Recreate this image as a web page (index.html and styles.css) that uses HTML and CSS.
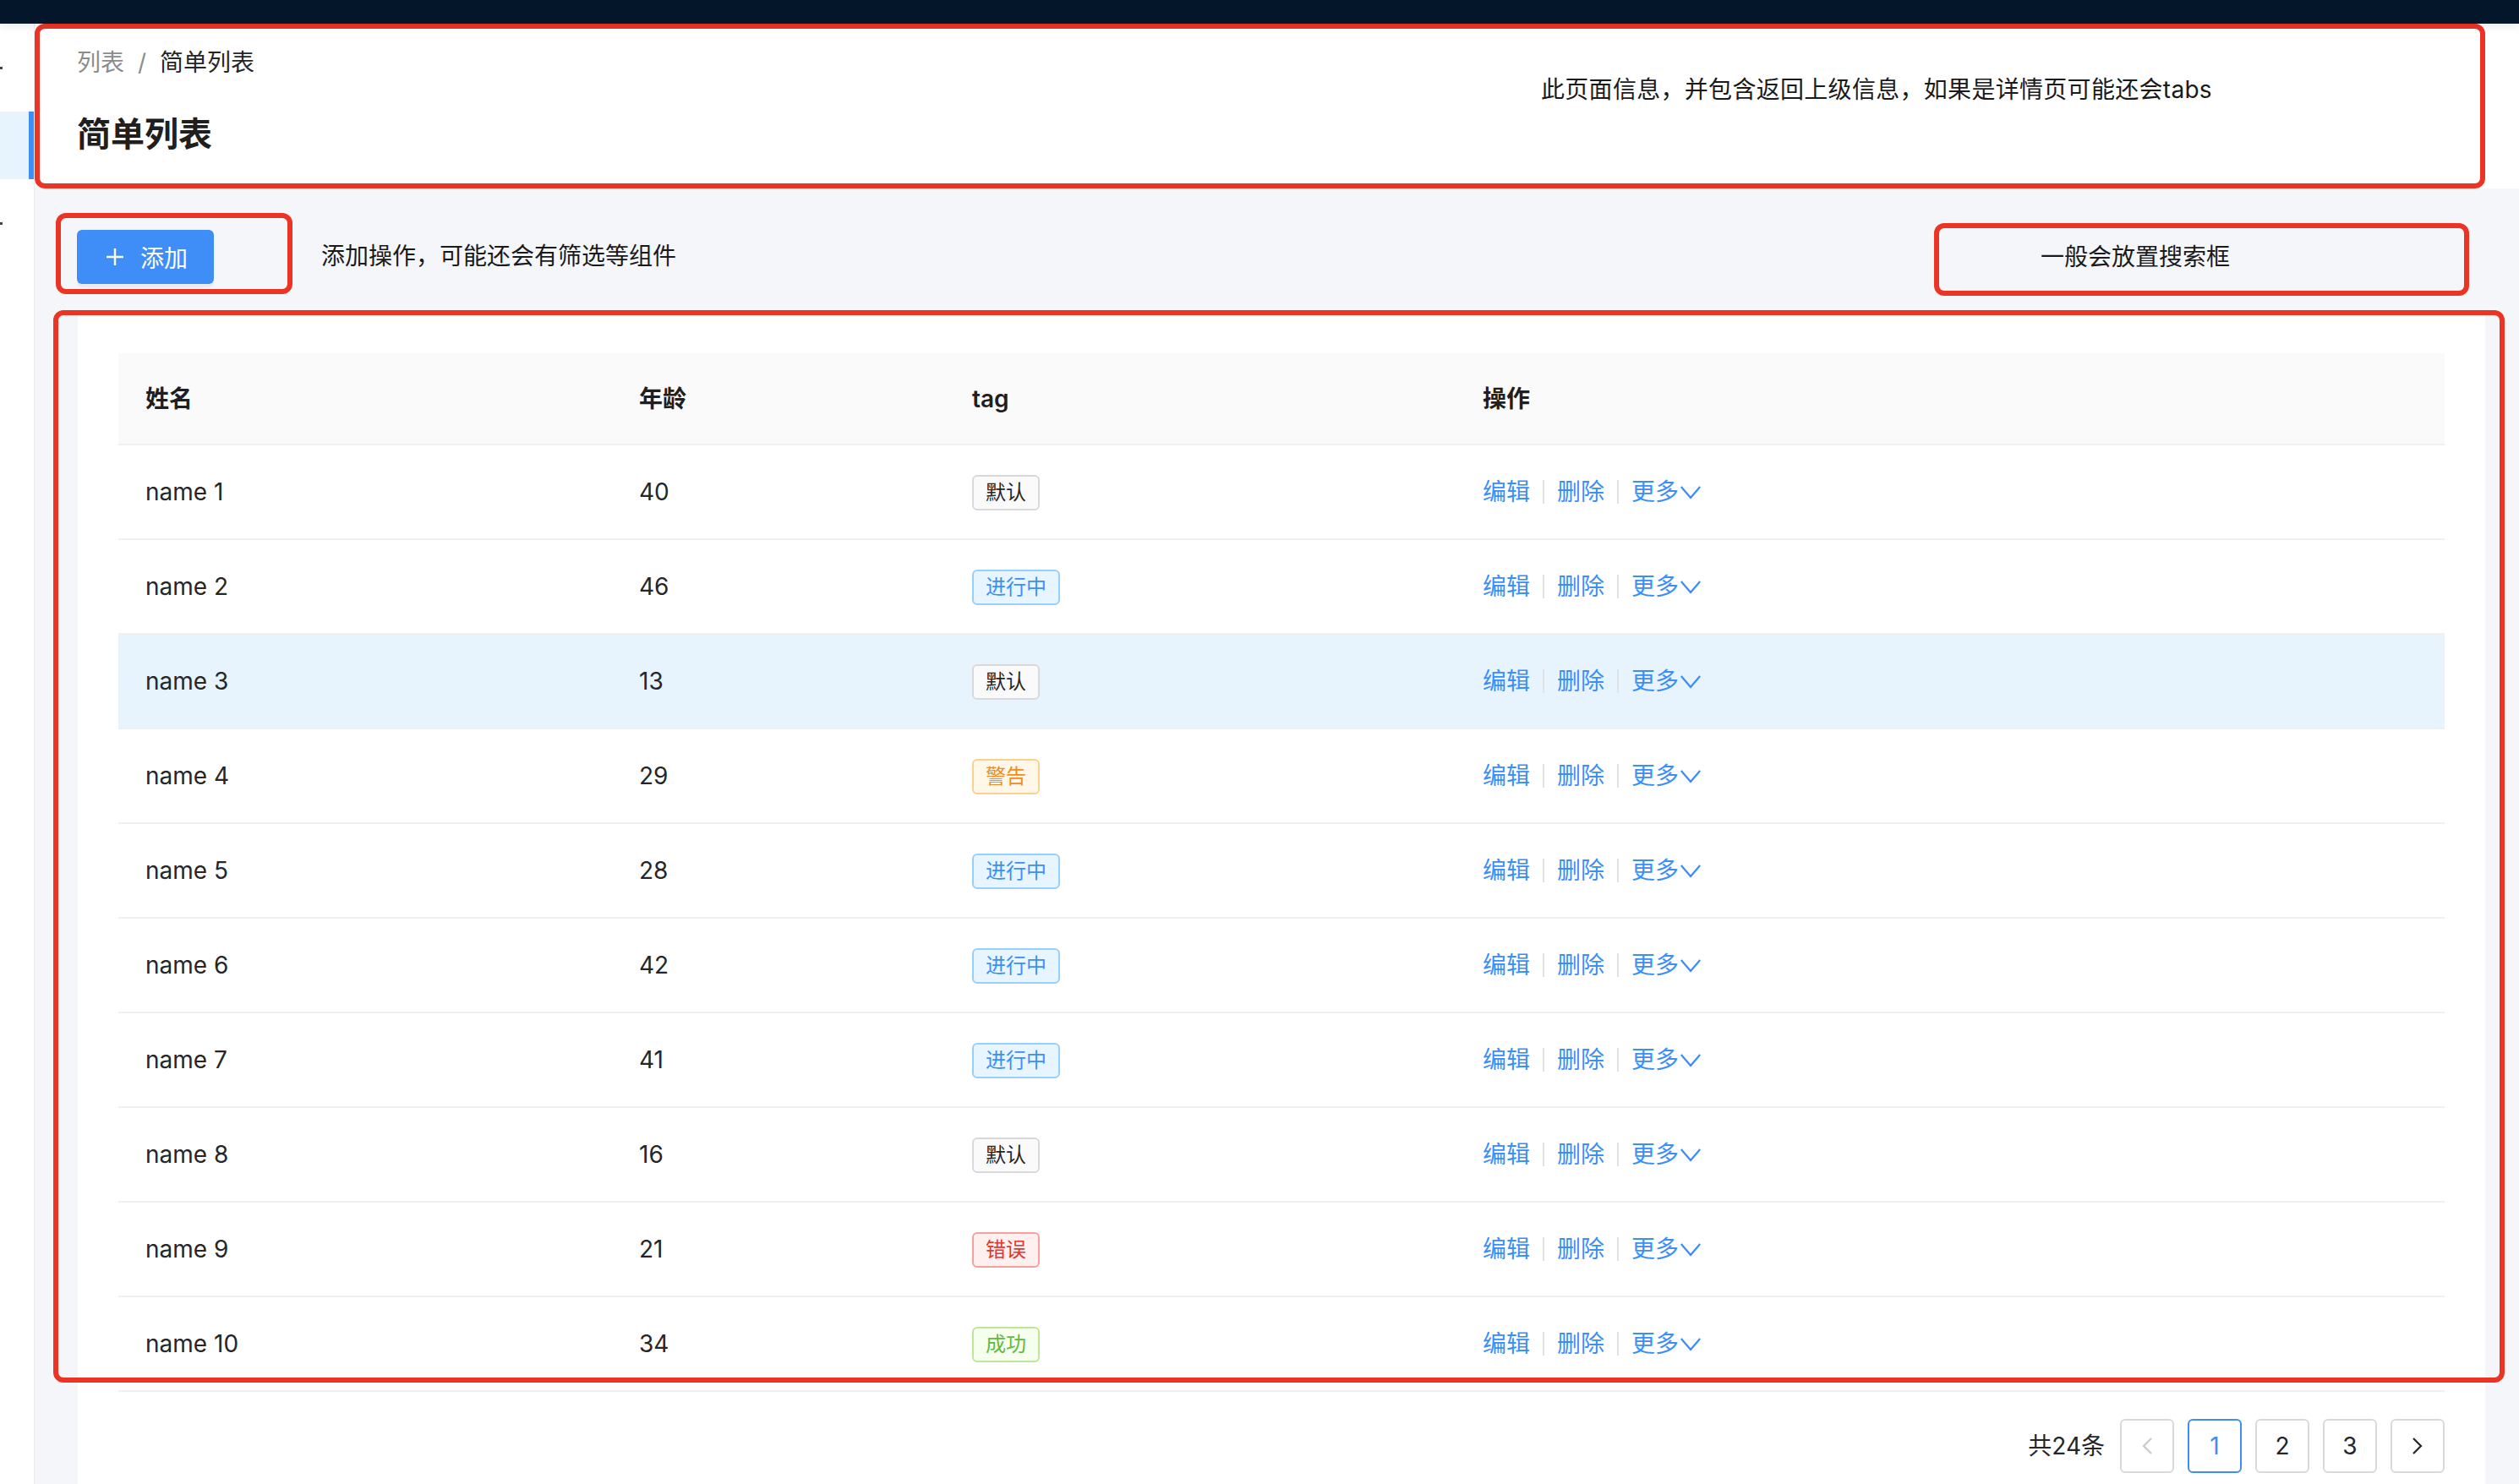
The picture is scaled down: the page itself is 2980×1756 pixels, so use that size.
FILE: index.html
```html
<!DOCTYPE html>
<html lang="zh-CN">
<head>
<meta charset="utf-8">
<title>简单列表</title>
<link rel="stylesheet" href="styles.css">
</head>
<body>
<div class="topbar"></div>
<div class="layout">
  <aside class="sider">
    <div class="menu-item tall"><span class="menu-dot"></span></div>
    <div class="menu-item selected"></div>
    <div class="menu-item tall"><span class="menu-dot"></span></div>
  </aside>
  <main class="main">
    <header class="page-header">
      <div class="header-frame">
        <div class="header-left">
          <nav class="breadcrumb"><span class="crumb-link">列表</span><span class="crumb-sep">/</span><span class="crumb-current">简单列表</span></nav>
          <h1 class="page-title">简单列表</h1>
        </div>
        <p class="header-note">此页面信息，并包含返回上级信息，如果是详情页可能还会tabs</p>
      </div>
    </header>

    <section class="toolbar">
      <div class="note-frame add-frame">
        <button class="btn-primary" type="button">
          <svg class="icon-plus" viewBox="0 0 22 22" width="22" height="22"><path d="M11 1v20M1 11h20" fill="none" stroke="currentColor" stroke-width="2.4"/></svg>
          <span>添加</span>
        </button>
      </div>
      <p class="toolbar-note">添加操作，可能还会有筛选等组件</p>
      <div class="note-frame search-frame"><span>一般会放置搜索框</span></div>
    </section>

    <section class="content">
      <div class="card">
        <div class="table">
          <div class="tr thead">
            <div class="cell">姓名</div>
            <div class="cell">年龄</div>
            <div class="cell">tag</div>
            <div class="cell">操作</div>
          </div>

          <div class="tr">
            <div class="cell">name 1</div><div class="cell">40</div>
            <div class="cell"><span class="tag tag-default">默认</span></div>
            <div class="cell actions"><a>编辑</a><i class="divider"></i><a>删除</a><i class="divider"></i><a class="more">更多<svg viewBox="0 0 28 18" width="26" height="17"><polyline points="2,2 14,16 26,2" fill="none" stroke="currentColor" stroke-width="2.4"/></svg></a></div>
          </div>
          <div class="tr">
            <div class="cell">name 2</div><div class="cell">46</div>
            <div class="cell"><span class="tag tag-processing">进行中</span></div>
            <div class="cell actions"><a>编辑</a><i class="divider"></i><a>删除</a><i class="divider"></i><a class="more">更多<svg viewBox="0 0 28 18" width="26" height="17"><polyline points="2,2 14,16 26,2" fill="none" stroke="currentColor" stroke-width="2.4"/></svg></a></div>
          </div>
          <div class="tr hover">
            <div class="cell">name 3</div><div class="cell">13</div>
            <div class="cell"><span class="tag tag-default">默认</span></div>
            <div class="cell actions"><a>编辑</a><i class="divider"></i><a>删除</a><i class="divider"></i><a class="more">更多<svg viewBox="0 0 28 18" width="26" height="17"><polyline points="2,2 14,16 26,2" fill="none" stroke="currentColor" stroke-width="2.4"/></svg></a></div>
          </div>
          <div class="tr">
            <div class="cell">name 4</div><div class="cell">29</div>
            <div class="cell"><span class="tag tag-warning">警告</span></div>
            <div class="cell actions"><a>编辑</a><i class="divider"></i><a>删除</a><i class="divider"></i><a class="more">更多<svg viewBox="0 0 28 18" width="26" height="17"><polyline points="2,2 14,16 26,2" fill="none" stroke="currentColor" stroke-width="2.4"/></svg></a></div>
          </div>
          <div class="tr">
            <div class="cell">name 5</div><div class="cell">28</div>
            <div class="cell"><span class="tag tag-processing">进行中</span></div>
            <div class="cell actions"><a>编辑</a><i class="divider"></i><a>删除</a><i class="divider"></i><a class="more">更多<svg viewBox="0 0 28 18" width="26" height="17"><polyline points="2,2 14,16 26,2" fill="none" stroke="currentColor" stroke-width="2.4"/></svg></a></div>
          </div>
          <div class="tr">
            <div class="cell">name 6</div><div class="cell">42</div>
            <div class="cell"><span class="tag tag-processing">进行中</span></div>
            <div class="cell actions"><a>编辑</a><i class="divider"></i><a>删除</a><i class="divider"></i><a class="more">更多<svg viewBox="0 0 28 18" width="26" height="17"><polyline points="2,2 14,16 26,2" fill="none" stroke="currentColor" stroke-width="2.4"/></svg></a></div>
          </div>
          <div class="tr">
            <div class="cell">name 7</div><div class="cell">41</div>
            <div class="cell"><span class="tag tag-processing">进行中</span></div>
            <div class="cell actions"><a>编辑</a><i class="divider"></i><a>删除</a><i class="divider"></i><a class="more">更多<svg viewBox="0 0 28 18" width="26" height="17"><polyline points="2,2 14,16 26,2" fill="none" stroke="currentColor" stroke-width="2.4"/></svg></a></div>
          </div>
          <div class="tr">
            <div class="cell">name 8</div><div class="cell">16</div>
            <div class="cell"><span class="tag tag-default">默认</span></div>
            <div class="cell actions"><a>编辑</a><i class="divider"></i><a>删除</a><i class="divider"></i><a class="more">更多<svg viewBox="0 0 28 18" width="26" height="17"><polyline points="2,2 14,16 26,2" fill="none" stroke="currentColor" stroke-width="2.4"/></svg></a></div>
          </div>
          <div class="tr">
            <div class="cell">name 9</div><div class="cell">21</div>
            <div class="cell"><span class="tag tag-error">错误</span></div>
            <div class="cell actions"><a>编辑</a><i class="divider"></i><a>删除</a><i class="divider"></i><a class="more">更多<svg viewBox="0 0 28 18" width="26" height="17"><polyline points="2,2 14,16 26,2" fill="none" stroke="currentColor" stroke-width="2.4"/></svg></a></div>
          </div>
          <div class="tr">
            <div class="cell">name 10</div><div class="cell">34</div>
            <div class="cell"><span class="tag tag-success">成功</span></div>
            <div class="cell actions"><a>编辑</a><i class="divider"></i><a>删除</a><i class="divider"></i><a class="more">更多<svg viewBox="0 0 28 18" width="26" height="17"><polyline points="2,2 14,16 26,2" fill="none" stroke="currentColor" stroke-width="2.4"/></svg></a></div>
          </div>
        </div>

        <div class="pagination">
          <span class="total">共24条</span>
          <span class="page-btn disabled"><svg viewBox="0 0 14 22" width="14" height="22"><polyline points="12,2 3,11 12,20" fill="none" stroke="currentColor" stroke-width="2.2"/></svg></span>
          <span class="page-btn active">1</span>
          <span class="page-btn">2</span>
          <span class="page-btn">3</span>
          <span class="page-btn"><svg viewBox="0 0 14 22" width="14" height="22"><polyline points="2,2 11,11 2,20" fill="none" stroke="currentColor" stroke-width="2.2"/></svg></span>
        </div>

        <div class="note-overlay"></div>
      </div>
    </section>
  </main>
</div>
</body>
</html>
```

FILE: styles.css
```css
* { box-sizing: border-box; }

html, body { margin: 0; padding: 0; }

body {
  width: 2980px;
  height: 1756px;
  overflow: hidden;
  background: #f5f6fa;
  font-family: "Inter", "Noto Sans CJK SC", sans-serif;
  font-size: 28px;
  color: #262626;
}

.topbar {
  height: 28px;
  background: #03162a;
  position: relative;
  z-index: 2;
  box-shadow: 0 2px 12px rgba(0, 21, 41, 0.12);
}

.layout {
  display: flex;
  height: 1728px;
}

/* sidebar */
.sider {
  width: 41px;
  flex: none;
  background: #fff;
  border-right: 1px solid #ebebf0;
  display: flex;
  flex-direction: column;
}

.menu-item {
  height: 80px;
  flex: none;
  display: flex;
  align-items: center;
}

.menu-item.tall { height: 104px; }

.menu-item.selected {
  background: #e7f4fe;
  border-right: 6px solid #3f8ef7;
}

.menu-dot {
  width: 3px;
  height: 3px;
  background: #444;
}

/* main */
.main {
  flex: 1;
  min-width: 0;
  display: flex;
  flex-direction: column;
}

.page-header {
  flex: none;
  background: #fff;
  height: 195px;
}

.header-frame {
  width: 2899px;
  height: 195px;
  border: 6px solid #ec3425;
  border-radius: 12px;
  display: grid;
  grid-template-columns: 1732px auto;
  align-items: start;
  padding: 19px 0 0 44px;
}

.breadcrumb {
  display: flex;
  line-height: 42px;
  font-size: 28px;
}

.crumb-link { color: #8c8c8c; }

.crumb-sep {
  color: #8c8c8c;
  margin: 0 16px;
}

.crumb-current { color: #262626; }

.page-title {
  margin: 36px 0 0;
  font-size: 40px;
  line-height: 56px;
  font-weight: 600;
  color: #1f1f1f;
}

.header-note {
  margin: 32px 0 0;
  line-height: 42px;
  color: #1a1a1a;
  letter-spacing: 0.3px;
}

/* toolbar */
.toolbar {
  flex: none;
  height: 147px;
  display: flex;
  align-items: flex-start;
  padding: 29px 59px 0 25px;
}

.note-frame {
  border: 6px solid #ec3425;
  border-radius: 12px;
}

.add-frame {
  width: 280px;
  height: 96px;
  padding: 14px 0 0 19px;
}

.btn-primary {
  width: 162px;
  height: 64px;
  border: none;
  border-radius: 6px;
  background: #3f8ef7;
  color: #fff;
  font-family: inherit;
  font-size: 28px;
  display: flex;
  align-items: center;
  gap: 19px;
  padding: 0 0 0 34px;
  box-shadow: 0 4px 0 rgba(0, 0, 0, 0.045);
}

.icon-plus { display: block; }

.toolbar-note {
  margin: 30px 0 0 34px;
  line-height: 42px;
  color: #1a1a1a;
}

.search-frame {
  margin-left: auto;
  margin-top: 12px;
  width: 633px;
  height: 86px;
  display: flex;
  align-items: center;
  padding: 0 0 6px 120px;
  color: #1a1a1a;
  line-height: 42px;
}

/* content card */
.content {
  flex: 1;
  min-height: 0;
  padding: 0 40px 0 51px;
}

.card {
  position: relative;
  height: 100%;
  background: #fff;
  padding: 48px;
}

.table { width: 100%; }

.tr {
  display: grid;
  grid-template-columns: 584px 394px 604px 1fr;
  align-items: center;
  height: 112px;
  border-bottom: 2px solid #f0f0f0;
}

.tr.thead {
  height: 109px;
  background: #fafafa;
  font-weight: 600;
  color: #1f1f1f;
}

.tr.hover { background: #e7f4fd; }

.cell {
  padding-left: 32px;
  line-height: 42px;
  white-space: nowrap;
}

.tag {
  display: inline-flex;
  align-items: center;
  height: 42px;
  padding: 0 14px;
  border: 2px solid #d9d9d9;
  border-radius: 6px;
  font-size: 24px;
  line-height: 38px;
  vertical-align: middle;
}

.tag-default { background: #fafafa; border-color: #d9d9d9; color: #262626; }
.tag-processing { background: #e6f5ff; border-color: #97d0fb; color: #3d8ef6; }
.tag-warning { background: #fff7e8; border-color: #fbd18f; color: #f08c22; }
.tag-error { background: #fdf0ef; border-color: #f5a19c; color: #e8342f; }
.tag-success { background: #f6ffee; border-color: #bfe79a; color: #63b93c; }

.actions {
  display: flex;
  align-items: center;
  color: #3b8ef6;
}

.actions a { display: flex; align-items: center; }

.divider {
  display: block;
  width: 2px;
  height: 28px;
  background: #e1e1e6;
  margin: 0 15px;
}

.more svg {
  display: block;
  margin-left: 1px;
}

/* pagination */
.pagination {
  margin-top: 32px;
  display: flex;
  justify-content: flex-end;
  align-items: center;
  gap: 16px;
}

.total {
  margin-right: 2px;
  line-height: 42px;
}

.page-btn {
  width: 64px;
  height: 64px;
  border: 2px solid #d9d9d9;
  border-radius: 6px;
  display: flex;
  align-items: center;
  justify-content: center;
  color: #262626;
  font-size: 28px;
}

.page-btn.active {
  border-color: #3f8ef7;
  color: #3f8ef7;
}

.page-btn.disabled { color: #c9c9c9; }

.page-btn svg { display: block; }

/* annotation frame over the table */
.note-overlay {
  position: absolute;
  left: -29px;
  top: -3px;
  width: 2900px;
  height: 1269px;
  border: 6px solid #ec3425;
  border-radius: 12px;
  pointer-events: none;
}
```
